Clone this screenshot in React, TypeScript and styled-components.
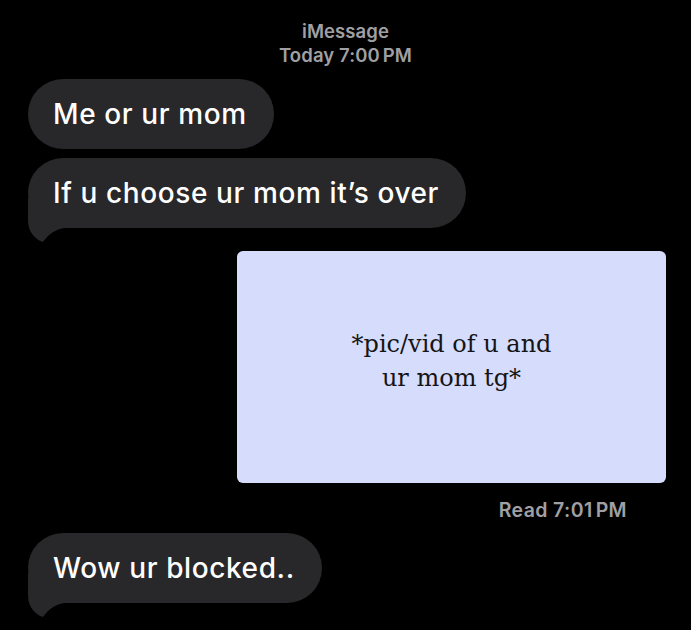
import React from "react";
import styled, { createGlobalStyle } from "styled-components";

const Global = createGlobalStyle`
  html, body { margin: 0; padding: 0; background: #000; }
  body { font-family: Inter, "Liberation Sans", sans-serif; }
`;

const Page = styled.div`
  width: 691px;
  min-height: 630px;
  background: #000;
  display: flex;
  flex-direction: column;
  padding-top: 19px;
  box-sizing: border-box;
  overflow: hidden;
`;

const Header = styled.div`
  text-align: center;
  color: #a0a0a4;
  font-family: Inter, "Liberation Sans", sans-serif;
  font-size: 18.5px;
  line-height: 24px;
  font-weight: 600;
  letter-spacing: 0.1px;
`;

const Thin = styled.span`
  margin-left: 3px;
`;

const Bubble = styled.div<{ $mt: number }>`
  position: relative;
  align-self: flex-start;
  margin-left: 28px;
  margin-top: ${(p) => p.$mt}px;
  height: 70px;
  padding: 0 27px 0 25px;
  display: flex;
  align-items: center;
  border-radius: 35px;
  background: #28282a;
  color: #fff;
  font-family: Inter, "Liberation Sans", sans-serif;
  font-size: 28px;
  font-weight: 500;
  letter-spacing: 0.6px;
  white-space: nowrap;
`;

const BubbleText = styled.span`
  position: relative;
  z-index: 1;
`;

const Tail = styled.svg`
  position: absolute;
  left: 0;
  top: 40px;
  width: 40px;
  height: 48px;
`;

const Media = styled.div`
  margin-top: 23px;
  margin-left: 237px;
  width: 429px;
  height: 232px;
  border-radius: 6px;
  background: #d6dcfc;
  display: flex;
  align-items: center;
  justify-content: center;
  text-align: center;
  color: #151515;
  font-family: "DejaVu Serif", serif;
  font-size: 24px;
  line-height: 34px;
  padding-bottom: 12px;
  box-sizing: border-box;
`;

const Status = styled.div`
  align-self: flex-end;
  margin-right: 64px;
  margin-top: 17px;
  line-height: 20px;
  color: #a0a0a4;
  font-family: Inter, "Liberation Sans", sans-serif;
  font-size: 19.5px;
  font-weight: 600;
  letter-spacing: 0.4px;
`;

function Incoming({ text, mt, tail }: { text: string; mt: number; tail?: boolean }) {
  return (
    <Bubble $mt={mt}>
      {tail && (
        <Tail viewBox="0 0 40 48">
          <path d="M0 0 L0 22 C0 33 6 41 15 44 C18 40 24 32 36 30 L36 0 Z" fill="#28282a" />
        </Tail>
      )}
      <BubbleText>{text}</BubbleText>
    </Bubble>
  );
}

export default function App() {
  return (
    <>
      <Global />
      <Page>
        <Header>
          <div>iMessage</div>
          <div>
            Today 7:00<Thin>PM</Thin>
          </div>
        </Header>
        <Incoming text="Me or ur mom" mt={12} />
        <Incoming text="If u choose ur mom it’s over" mt={9} tail />
        <Media>
          *pic/vid of u and
          <br />
          ur mom tg*
        </Media>
        <Status>
          Read 7:01<Thin>PM</Thin>
        </Status>
        <Incoming text="Wow ur blocked.." mt={13} tail />
      </Page>
    </>
  );
}
